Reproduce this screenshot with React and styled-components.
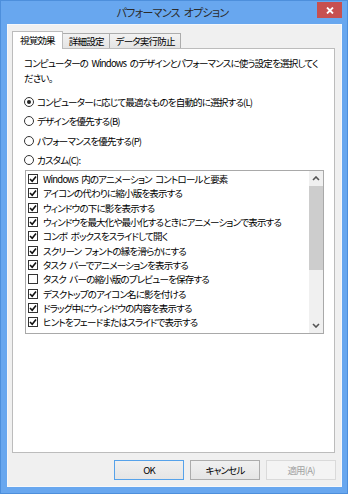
import { createGlobalStyle, styled } from 'styled-components';

const GlobalStyle = createGlobalStyle`
    html, body {
        margin: 0;
        padding: 0;
        background: #68a7ef;
    }
    body {
        font-family: "Noto Sans CJK JP", "Noto Sans", sans-serif;
        font-feature-settings: "palt";
        letter-spacing: -0.8px;
        word-spacing: 2px;
    }
`;

const Frame = styled.div`
    width: 348px;
    height: 494px;
    box-sizing: border-box;
    background: #68a7ef;
    border: 1px solid #4d8fdc;
    padding: 0 5px 6px 6px;
    display: flex;
    flex-direction: column;
`;

const TitleBar = styled.div`
    height: 23px;
    display: flex;
    align-items: flex-start;
    flex-shrink: 0;
`;

const Title = styled.div`
    flex: 1;
    padding-left: 21px;
    text-align: center;
    line-height: 22px;
    font-size: 11px;
    letter-spacing: -0.7px;
    color: #2b2b2b;
`;

const CloseButton = styled.div`
    width: 25px;
    height: 16px;
    margin-top: 1px;
    background: #c75050;
    display: flex;
    align-items: center;
    justify-content: center;
`;

const Client = styled.div`
    flex: 1;
    background: #f0f0f0;
    border: 1px solid #f6f8fb;
    padding: 6px 5px 6px 4px;
    display: flex;
    flex-direction: column;
`;

const TabRow = styled.div`
    display: flex;
    align-items: flex-end;
    height: 18px;
    margin-bottom: -1px;
    position: relative;
    z-index: 1;
`;

const Tab = styled.div`
    box-sizing: border-box;
    font-size: 9.5px;
    color: #000;
    display: flex;
    align-items: center;
    justify-content: center;
    ${({ $active }) => $active ? `
        height: 18px;
        padding: 0 7px 1px 7px;
        background: #fff;
        border: 1px solid #bcbcbc;
        border-bottom: none;
    ` : `
        height: 15px;
        padding: 0 5px 0 6px;
        margin-bottom: 1px;
        background: linear-gradient(#f2f2f2, #e4e4e4);
        border-top: 1px solid #acacac;
        border-right: 1px solid #acacac;
    `}
`;

const Panel = styled.div`
    flex: 1;
    background: #fff;
    border: 1px solid #bcbcbc;
    margin-right: 1px;
    padding: 7px 11px 0 11px;
    display: flex;
    flex-direction: column;
`;

const Description = styled.p`
    margin: 0;
    font-size: 9.5px;
    line-height: 15px;
    color: #000;
    white-space: nowrap;
`;

const RadioGroup = styled.div`
    margin-top: 6px;
    display: flex;
    flex-direction: column;
`;

const RadioRow = styled.label`
    height: 19.5px;
    display: flex;
    align-items: center;
    gap: 3px;
    font-size: 9.5px;
    color: #000;
`;

const RadioCircle = styled.span`
    width: 10px;
    height: 10px;
    box-sizing: border-box;
    border: 1px solid #333;
    border-radius: 50%;
    background: #fff;
    display: flex;
    align-items: center;
    justify-content: center;
    &::after {
        content: '';
        width: 4px;
        height: 4px;
        border-radius: 50%;
        background: ${({ $checked }) => $checked ? '#222' : 'transparent'};
    }
`;

const ListBox = styled.div`
    margin-left: 1px;
    width: 299px;
    height: 164px;
    box-sizing: border-box;
    border: 1px solid #a9a9a9;
    display: flex;
`;

const Items = styled.div`
    flex: 1;
    padding-top: 1px;
    overflow: hidden;
`;

const Item = styled.div`
    height: 14.3px;
    display: flex;
    align-items: center;
    gap: 5px;
    padding-left: 2px;
    font-size: 9.5px;
    color: #000;
    white-space: nowrap;
`;

const CheckBox = styled.span`
    width: 10px;
    height: 10px;
    box-sizing: border-box;
    border: 1px solid #333;
    background: #fff;
    display: flex;
    align-items: center;
    justify-content: center;
    flex-shrink: 0;
`;

const ScrollBar = styled.div`
    width: 14px;
    background: #f0f0f0;
    display: flex;
    flex-direction: column;
`;

const ArrowButton = styled.div`
    height: 15px;
    display: flex;
    align-items: center;
    justify-content: center;
    flex-shrink: 0;
`;

const Track = styled.div`
    flex: 1;
`;

const Thumb = styled.div`
    height: 84px;
    background: #cdcdcd;
`;

const ButtonRow = styled.div`
    margin-top: 7px;
    display: flex;
    justify-content: flex-end;
    gap: 6px;
`;

const Button = styled.div`
    width: 70px;
    height: 20px;
    box-sizing: border-box;
    display: flex;
    align-items: center;
    justify-content: center;
    font-size: 9.5px;
    color: ${({ $disabled }) => $disabled ? '#a3a3a3' : '#000'};
    background: ${({ $disabled }) => $disabled ? '#f4f4f4' : 'linear-gradient(#f0f0f0, #e5e5e5)'};
    border: 1px solid ${({ $primary, $disabled }) => $primary ? '#56a2ea' : $disabled ? '#dadada' : '#acacac'};
`;

const options = [
    { label: 'コンピューターに応じて最適なものを自動的に選択する(L)', checked: true },
    { label: 'デザインを優先する(B)' },
    { label: 'パフォーマンスを優先する(P)' },
    { label: 'カスタム(C):' },
];

const effects = [
    { label: 'Windows 内のアニメーション コントロールと要素', on: true },
    { label: 'アイコンの代わりに縮小版を表示する', on: true },
    { label: 'ウィンドウの下に影を表示する', on: true },
    { label: 'ウィンドウを最大化や最小化するときにアニメーションで表示する', on: true },
    { label: 'コンボ ボックスをスライドして開く', on: true },
    { label: 'スクリーン フォントの縁を滑らかにする', on: true },
    { label: 'タスク バーでアニメーションを表示する', on: true },
    { label: 'タスク バーの縮小版のプレビューを保存する', on: false },
    { label: 'デスクトップのアイコン名に影を付ける', on: true },
    { label: 'ドラッグ中にウィンドウの内容を表示する', on: true },
    { label: 'ヒントをフェードまたはスライドで表示する', on: true },
];

function Chevron({ down }) {
    return (
        <svg width="8" height="5" viewBox="0 0 8 5">
            <path d={down ? 'M1 1 L4 4 L7 1' : 'M1 4 L4 1 L7 4'} fill="none" stroke="#555" strokeWidth="1.6" />
        </svg>
    );
}

export default function App() {
    return (
        <>
            <GlobalStyle />
            <Frame>
                <TitleBar>
                    <Title>パフォーマンス オプション</Title>
                    <CloseButton>
                        <svg width="8" height="7" viewBox="0 0 8 7">
                            <path d="M1 0.5 L7 6.5 M7 0.5 L1 6.5" stroke="#fff" strokeWidth="1.8" />
                        </svg>
                    </CloseButton>
                </TitleBar>
                <Client>
                    <TabRow>
                        <Tab $active>視覚効果</Tab>
                        <Tab>詳細設定</Tab>
                        <Tab>データ実行防止</Tab>
                    </TabRow>
                    <Panel>
                        <Description>
                            コンピューターの Windows のデザインとパフォーマンスに使う設定を選択してく<br />ださい。
                        </Description>
                        <RadioGroup>
                            {options.map((o) => (
                                <RadioRow key={o.label}>
                                    <RadioCircle $checked={o.checked} />
                                    {o.label}
                                </RadioRow>
                            ))}
                        </RadioGroup>
                        <ListBox>
                            <Items>
                                {effects.map((e) => (
                                    <Item key={e.label}>
                                        <CheckBox>
                                            {e.on && (
                                                <svg width="8" height="8" viewBox="0 0 8 8">
                                                    <path d="M1 4 L3.2 6.3 L7 1.5" fill="none" stroke="#111" strokeWidth="1.6" />
                                                </svg>
                                            )}
                                        </CheckBox>
                                        {e.label}
                                    </Item>
                                ))}
                            </Items>
                            <ScrollBar>
                                <ArrowButton><Chevron /></ArrowButton>
                                <Track><Thumb /></Track>
                                <ArrowButton><Chevron down /></ArrowButton>
                            </ScrollBar>
                        </ListBox>
                    </Panel>
                    <ButtonRow>
                        <Button $primary>OK</Button>
                        <Button>キャンセル</Button>
                        <Button $disabled>適用(A)</Button>
                    </ButtonRow>
                </Client>
            </Frame>
        </>
    );
}
